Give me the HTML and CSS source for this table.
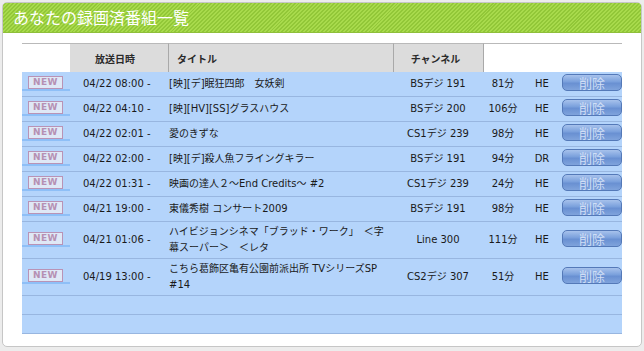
FILE: index.html
```html
<!DOCTYPE html>
<html lang="ja">
<head>
<meta charset="utf-8">
<title>あなたの録画済番組一覧</title>
<link rel="stylesheet" href="styles.css">
</head>
<body>
<div class="panel">
  <h1 class="panel-title">あなたの録画済番組一覧</h1>
  <table class="rec">
    <colgroup>
      <col class="w-new"><col class="w-date"><col class="w-title"><col class="w-ch"><col class="w-min"><col class="w-mode"><col class="w-del">
    </colgroup>
    <thead>
      <tr>
        <th class="h-plain"></th>
        <th class="h-date">放送日時</th>
        <th class="h-title">タイトル</th>
        <th class="h-ch">チャンネル</th>
        <th class="h-end" colspan="3"></th>
      </tr>
    </thead>
    <tbody>
      <tr>
        <td class="c-new"><a class="new-link"><span class="new">NEW</span></a></td>
        <td class="c-date">04/22 08:00 -</td>
        <td class="c-title">[映][デ]眠狂四郎　女妖剣</td>
        <td class="c-ch">BSデジ 191</td>
        <td class="c-min">81分</td>
        <td class="c-mode">HE</td>
        <td class="c-del"><button class="del">削除</button></td>
      </tr>
      <tr>
        <td class="c-new"><a class="new-link"><span class="new">NEW</span></a></td>
        <td class="c-date">04/22 04:10 -</td>
        <td class="c-title">[映][HV][SS]グラスハウス</td>
        <td class="c-ch">BSデジ 200</td>
        <td class="c-min">106分</td>
        <td class="c-mode">HE</td>
        <td class="c-del"><button class="del">削除</button></td>
      </tr>
      <tr>
        <td class="c-new"><a class="new-link"><span class="new">NEW</span></a></td>
        <td class="c-date">04/22 02:01 -</td>
        <td class="c-title">愛のきずな</td>
        <td class="c-ch">CS1デジ 239</td>
        <td class="c-min">98分</td>
        <td class="c-mode">HE</td>
        <td class="c-del"><button class="del">削除</button></td>
      </tr>
      <tr>
        <td class="c-new"><a class="new-link"><span class="new">NEW</span></a></td>
        <td class="c-date">04/22 02:00 -</td>
        <td class="c-title">[映][デ]殺人魚フライングキラー</td>
        <td class="c-ch">BSデジ 191</td>
        <td class="c-min">94分</td>
        <td class="c-mode">DR</td>
        <td class="c-del"><button class="del">削除</button></td>
      </tr>
      <tr>
        <td class="c-new"><a class="new-link"><span class="new">NEW</span></a></td>
        <td class="c-date">04/22 01:31 -</td>
        <td class="c-title">映画の達人２～End Credits～ #2</td>
        <td class="c-ch">CS1デジ 239</td>
        <td class="c-min">24分</td>
        <td class="c-mode">HE</td>
        <td class="c-del"><button class="del">削除</button></td>
      </tr>
      <tr>
        <td class="c-new"><a class="new-link"><span class="new">NEW</span></a></td>
        <td class="c-date">04/21 19:00 -</td>
        <td class="c-title">東儀秀樹 コンサート2009</td>
        <td class="c-ch">BSデジ 191</td>
        <td class="c-min">98分</td>
        <td class="c-mode">HE</td>
        <td class="c-del"><button class="del">削除</button></td>
      </tr>
      <tr>
        <td class="c-new"><a class="new-link"><span class="new">NEW</span></a></td>
        <td class="c-date">04/21 01:06 -</td>
        <td class="c-title">ハイビジョンシネマ「ブラッド・ワーク」　＜字幕スーパー＞　＜レタ</td>
        <td class="c-ch">Line 300</td>
        <td class="c-min">111分</td>
        <td class="c-mode">HE</td>
        <td class="c-del"><button class="del">削除</button></td>
      </tr>
      <tr>
        <td class="c-new"><a class="new-link"><span class="new">NEW</span></a></td>
        <td class="c-date">04/19 13:00 -</td>
        <td class="c-title">こちら葛飾区亀有公園前派出所 TVシリーズSP #14</td>
        <td class="c-ch">CS2デジ 307</td>
        <td class="c-min">51分</td>
        <td class="c-mode">HE</td>
        <td class="c-del"><button class="del">削除</button></td>
      </tr>
      <tr class="empty"><td></td><td></td><td></td><td></td><td></td><td></td><td></td></tr>
      <tr class="empty"><td></td><td></td><td></td><td></td><td></td><td></td><td></td></tr>
    </tbody>
  </table>
</div>
</body>
</html>
```
FILE: styles.css
```css
html, body {
  margin: 0;
  padding: 0;
}
body {
  background: #ececec;
  padding: 2px;
  font-family: "DejaVu Sans", "Noto Sans CJK JP", sans-serif;
  font-size: 10px;
  color: #1a1a1a;
}
.panel {
  width: 640px;
  height: 345px;
  box-sizing: border-box;
  background: #fff;
  border: 1px solid #c6c6c6;
  border-radius: 5px;
  overflow: hidden;
}
.panel-title {
  margin: 0;
  height: 29px;
  padding-left: 10px;
  font-family: "Noto Sans CJK JP", sans-serif;
  font-weight: normal;
  font-size: 16px;
  line-height: 29px;
  color: #fff;
  background-color: #9dd040;
  background-image: repeating-linear-gradient(135deg, #a8da4c 0 1.4px, #92c738 1.4px 2.8px);
  border-bottom: 1px solid #8fbf3a;
}
.rec {
  margin: 10px 0 0 19px;
  width: 600px;
  border-collapse: separate;
  border-spacing: 0;
  table-layout: fixed;
}
.w-new { width: 48px; }
.w-date { width: 98px; }
.w-title { width: 225px; }
.w-ch { width: 90px; }
.w-min { width: 40px; }
.w-mode { width: 38px; }
.w-del { width: 61px; }

.rec th {
  box-sizing: border-box;
  height: 29px;
  border-top: 1px solid #b9b9b9;
  font-weight: bold;
  font-size: 10px;
  color: #2a2a2a;
  padding: 0;
  vertical-align: middle;
}
.h-plain, .h-end { background: #fff; }
.h-date, .h-title, .h-ch { background: #dcdcdc; }
.h-date { text-align: center; padding-right: 8px !important; }
.h-title { text-align: left; padding-left: 8px !important; border-left: 1px solid #a9a9a9; }
.h-ch { text-align: center; padding-right: 6px !important; border-left: 1px solid #a9a9a9; }
.h-end { border-left: 1px solid #a9a9a9; }

.rec td {
  box-sizing: border-box;
  height: 25px;
  padding: 2px 0;
  line-height: 16px;
  background: #b4d4fb;
  border-bottom: 1px solid #98b6e0;
  vertical-align: middle;
  white-space: normal;
}
.rec tr.empty td { height: 19px; padding: 0; }

.rec td.c-new { padding: 0; }
.new-link {
  display: block;
  padding-left: 6px;
  margin-bottom: 2px;
  border-bottom: 2px solid #8ebff7;
  line-height: 0;
}
.new {
  display: inline-block;
  box-sizing: border-box;
  width: 35px;
  height: 13px;
  border: 1px solid #b993b6;
  background: #dfe8f6;
  color: #b690b3;
  font-weight: bold;
  font-size: 9px;
  line-height: 11px;
  letter-spacing: 0.4px;
  text-align: center;
}
.rec td.c-date { padding-left: 13px; }
.rec td.c-title { padding-left: 1px; }
.c-ch { text-align: center; }
.c-min { text-align: center; }
.c-mode { text-align: center; }
.rec td.c-del { padding: 0 0 0 1px; }
.del {
  display: flex;
  align-items: center;
  justify-content: center;
  box-sizing: border-box;
  width: 60px;
  height: 17px;
  margin: 0 0 4px 0;
  padding: 0;
  border: 1px solid #5479b8;
  border-radius: 5px;
  background: linear-gradient(#a7c2ec 0%, #7aa0dc 45%, #6990d2 55%, #7fa3dc 100%);
  color: #d0def5;
  font-family: "Noto Sans CJK JP", sans-serif;
  font-size: 13px;
  line-height: 15px;
}
```
